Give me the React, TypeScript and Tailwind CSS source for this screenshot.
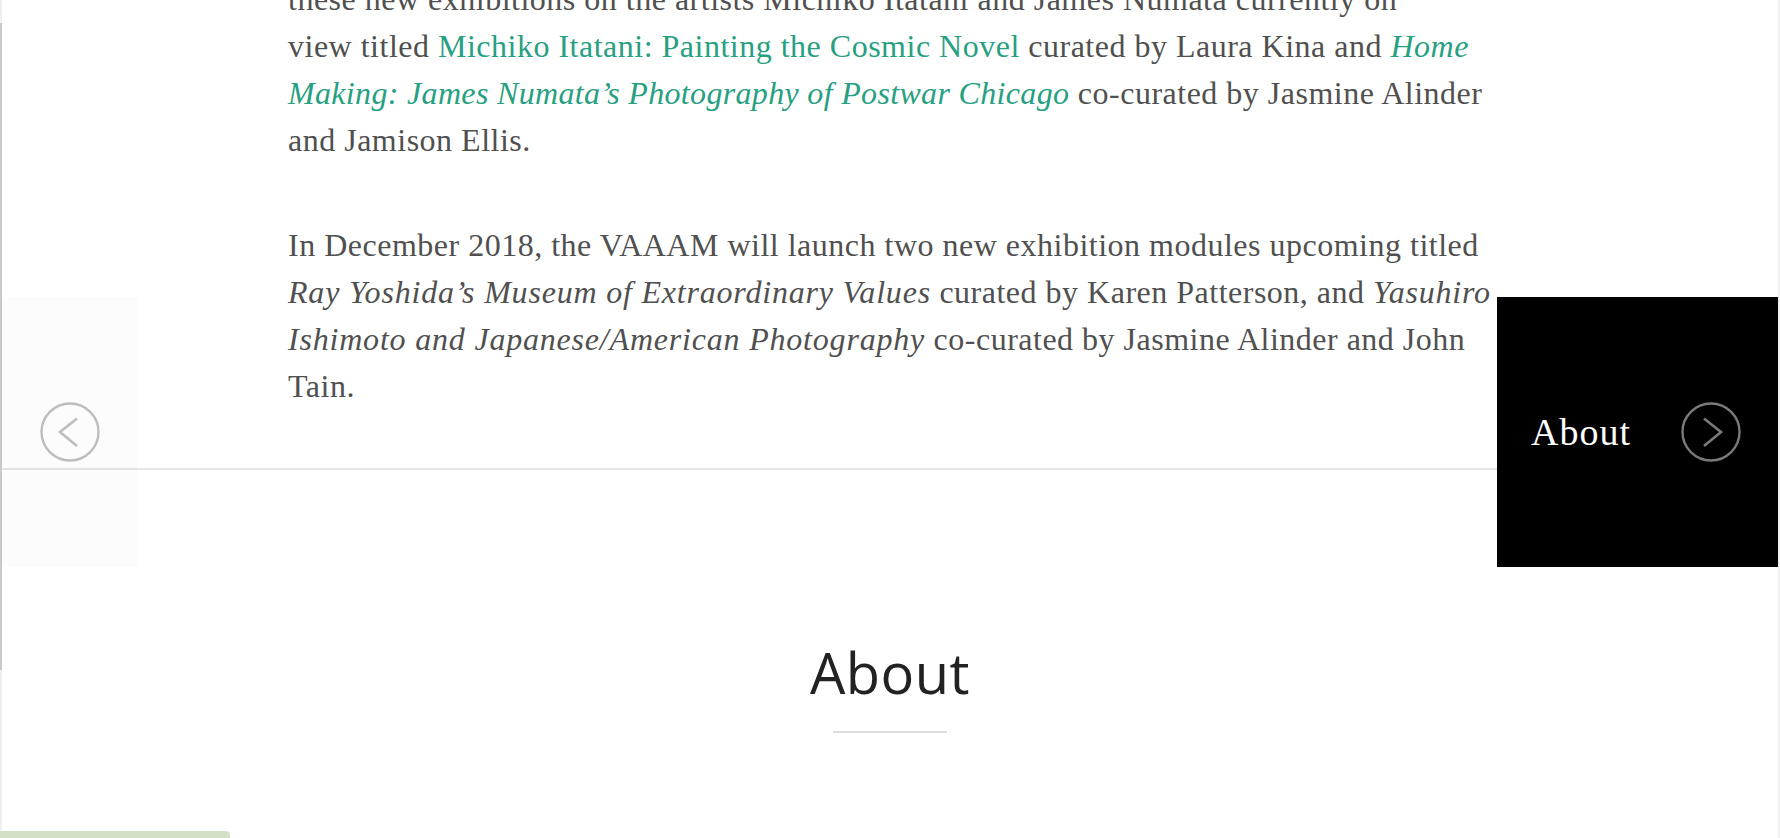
import React from "react";

function Chevron({ dir, color }: { dir: "left" | "right"; color: string }) {
  return (
    <svg width="60" height="60" viewBox="0 0 60 60" fill="none">
      <circle cx="30" cy="30" r="28.5" stroke={color} strokeWidth="2.4" />
      {dir === "left" ? (
        <polyline points="37,16.5 20,30 37,44" stroke={color} strokeWidth="2.6" fill="none" />
      ) : (
        <polyline points="23,16.5 40,30 23,44" stroke={color} strokeWidth="2.6" fill="none" />
      )}
    </svg>
  );
}

export default function App() {
  const serif = "font-['Liberation_Serif',serif]";
  return (
    <div className="relative flex h-[838px] w-full overflow-hidden bg-white">
      <div className="flex w-[2px] shrink-0 flex-col">
        <div className="h-[23px] bg-[#efefef]" />
        <div className="h-[647px] bg-[#c9c9c9]" />
        <div className="flex-1 bg-[#efefef]" />
      </div>

      <main className="flex flex-1 flex-col">
        <article className="w-full border-b-2 border-[#e6e6e6] pb-[58px]">
          <div
            className={`mx-auto mt-[-24px] w-[1204px] ${serif} text-[32px] leading-[47px] tracking-[0.5px] text-[#505050]`}
          >
            <p>
              these new exhibitions on the artists Michiko Itatani and James Numata currently on
              <br />
              view titled <span className="text-[#27a082]">Michiko Itatani: Painting the Cosmic Novel</span> curated by Laura Kina and{" "}
              <em className="text-[#27a082]">Home</em>
              <br />
              <em className="tracking-[0.33px] text-[#27a082]">Making: James Numata’s Photography of Postwar Chicago</em> co-curated by Jasmine Alinder
              <br />
              and Jamison Ellis.
            </p>
            <p className="mt-[58px]">
              In December 2018, the VAAAM will launch two new exhibition modules upcoming titled
              <br />
              <em className="tracking-[0.8px]">Ray Yoshida’s Museum of Extraordinary Values</em> curated by Karen Patterson, and{" "}
              <em className="tracking-[0.8px]">Yasuhiro</em>
              <br />
              <em className="tracking-[0.8px]">Ishimoto and Japanese/American Photography</em> co-curated by Jasmine Alinder and John
              <br />
              Tain.
            </p>
          </div>
        </article>

        <section className="flex flex-col items-center pt-[160px]">
          <h2 className="font-['Open_Sans',sans-serif] text-[56px] font-normal leading-normal tracking-[0.5px] text-[#222]">
            About
          </h2>
          <div className="mt-[17px] h-[2px] w-[114px] bg-[#dddddd]" />
        </section>
      </main>

      <div className="w-[2px] shrink-0 bg-[#f0f0f0]" />

      {/* previous post nav overlay */}
      <div className="absolute left-[2px] top-[297px] flex h-[270px] w-[135px] items-center justify-center bg-[rgba(0,0,0,0.012)]">
        <Chevron dir="left" color="#bdbdbd" />
      </div>

      {/* next post nav overlay */}
      <div className="absolute right-[2px] top-[297px] flex h-[270px] w-[281px] items-center bg-black pl-[34px]">
        <span className={`${serif} text-[38px] leading-none tracking-[1px] text-white`}>About</span>
        <div className="ml-[50px]">
          <Chevron dir="right" color="#7a7a7a" />
        </div>
      </div>

      <div className="absolute bottom-0 left-0 h-[7px] w-[230px] rounded-tr-[4px] bg-[#d3e0c5]" />
    </div>
  );
}
